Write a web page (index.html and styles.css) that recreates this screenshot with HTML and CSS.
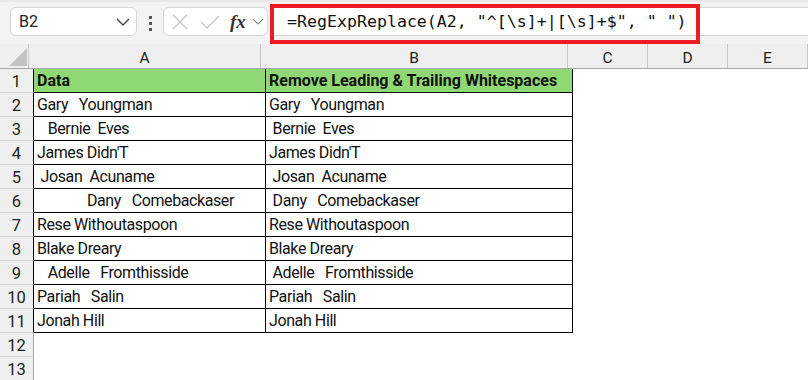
FILE: index.html
```html
<!DOCTYPE html>
<html lang="en">
<head>
    <meta charset="UTF-8">
    <meta name="viewport" content="width=device-width, initial-scale=1.0">
    <title>RegExpReplace - Trim Whitespaces</title>
    <link rel="stylesheet" href="styles.css">
</head>
<body>
    <div class="toolbar">
        <div class="namebox">
            <span>B2</span>
            <svg class="chev" width="14" height="8" viewBox="0 0 14 8"><path d="M1 1l6 6 6-6" fill="none" stroke="#444" stroke-width="1.4"/></svg>
        </div>
        <div class="grip"><i></i><i></i><i></i></div>
        <div class="fxbox">
            <svg width="16" height="16" viewBox="0 0 16 16"><path d="M1 1l14 14M15 1L1 15" fill="none" stroke="#c4c4c4" stroke-width="1.3"/></svg>
            <svg width="20" height="14" viewBox="0 0 20 14"><path d="M1 7l6 6L19 1" fill="none" stroke="#c4c4c4" stroke-width="1.3"/></svg>
            <span class="fx">fx</span>
            <svg width="12" height="7" viewBox="0 0 12 7"><path d="M1 1l5 5 5-5" fill="none" stroke="#888" stroke-width="1.2"/></svg>
        </div>
        <div class="formula"><span>=RegExpReplace(A2, "^[\s]+|[\s]+$", " ")</span></div>
        <div class="highlight"></div>
    </div>

    <div class="sheet">
        <div class="row head">
            <div class="corner"><svg width="18" height="18" viewBox="0 0 18 18"><path d="M18 0V18H0Z" fill="#c3c3c3"/></svg></div>
            <div class="colhead col-a">A</div>
            <div class="colhead col-b">B</div>
            <div class="colhead col-x">C</div>
            <div class="colhead col-x">D</div>
            <div class="colhead col-x">E</div>
        </div>
        <div class="row">
            <div class="rownum in-table">1</div>
            <div class="cell col-a title">Data</div>
            <div class="cell col-b title">Remove Leading &amp; Trailing Whitespaces</div>
            <div class="empty col-x"></div><div class="empty col-x"></div><div class="empty col-x"></div>
        </div>
        <div class="row">
            <div class="rownum in-table">2</div>
            <div class="cell col-a">Gary   Youngman</div>
            <div class="cell col-b">Gary   Youngman</div>
            <div class="empty col-x"></div><div class="empty col-x"></div><div class="empty col-x"></div>
        </div>
        <div class="row">
            <div class="rownum in-table">3</div>
            <div class="cell col-a">   Bernie  Eves</div>
            <div class="cell col-b"> Bernie  Eves</div>
            <div class="empty col-x"></div><div class="empty col-x"></div><div class="empty col-x"></div>
        </div>
        <div class="row">
            <div class="rownum in-table">4</div>
            <div class="cell col-a">James Didn'T</div>
            <div class="cell col-b">James Didn'T</div>
            <div class="empty col-x"></div><div class="empty col-x"></div><div class="empty col-x"></div>
        </div>
        <div class="row">
            <div class="rownum in-table">5</div>
            <div class="cell col-a"> Josan  Acuname</div>
            <div class="cell col-b"> Josan  Acuname</div>
            <div class="empty col-x"></div><div class="empty col-x"></div><div class="empty col-x"></div>
        </div>
        <div class="row">
            <div class="rownum in-table">6</div>
            <div class="cell col-a">              Dany   Comebackaser</div>
            <div class="cell col-b"> Dany   Comebackaser</div>
            <div class="empty col-x"></div><div class="empty col-x"></div><div class="empty col-x"></div>
        </div>
        <div class="row">
            <div class="rownum in-table">7</div>
            <div class="cell col-a">Rese Withoutaspoon</div>
            <div class="cell col-b">Rese Withoutaspoon</div>
            <div class="empty col-x"></div><div class="empty col-x"></div><div class="empty col-x"></div>
        </div>
        <div class="row">
            <div class="rownum in-table">8</div>
            <div class="cell col-a">Blake Dreary</div>
            <div class="cell col-b">Blake Dreary</div>
            <div class="empty col-x"></div><div class="empty col-x"></div><div class="empty col-x"></div>
        </div>
        <div class="row">
            <div class="rownum in-table">9</div>
            <div class="cell col-a">   Adelle   Fromthisside</div>
            <div class="cell col-b"> Adelle   Fromthisside</div>
            <div class="empty col-x"></div><div class="empty col-x"></div><div class="empty col-x"></div>
        </div>
        <div class="row">
            <div class="rownum in-table">10</div>
            <div class="cell col-a">Pariah   Salin</div>
            <div class="cell col-b">Pariah   Salin</div>
            <div class="empty col-x"></div><div class="empty col-x"></div><div class="empty col-x"></div>
        </div>
        <div class="row">
            <div class="rownum in-table">11</div>
            <div class="cell col-a">Jonah Hill</div>
            <div class="cell col-b">Jonah Hill</div>
            <div class="empty col-x"></div><div class="empty col-x"></div><div class="empty col-x"></div>
        </div>
        <div class="row">
            <div class="rownum">12</div>
            <div class="empty col-a"></div><div class="empty col-b"></div>
            <div class="empty col-x"></div><div class="empty col-x"></div><div class="empty col-x"></div>
        </div>
        <div class="row">
            <div class="rownum">13</div>
            <div class="empty col-a"></div><div class="empty col-b"></div>
            <div class="empty col-x"></div><div class="empty col-x"></div><div class="empty col-x"></div>
        </div>
    </div>
</body>
</html>
```

FILE: styles.css
```css
/* Excel-like sheet with a formula bar on top */
* {
    box-sizing: border-box;
}

body {
    margin: 0;
    width: 808px;
    height: 380px;
    overflow: hidden;
    background-color: #fff;
    font-family: Roboto, "Liberation Sans", sans-serif;
    color: #111;
}

/* formula bar */
.toolbar {
    position: relative;
    display: flex;
    align-items: flex-start;
    height: 44px;
    padding-top: 7px;
    background-color: #f3f3f3;
    border-top: 2px solid #e8e8e8;
}

.namebox {
    display: flex;
    align-items: center;
    justify-content: space-between;
    width: 127px;
    height: 29px;
    margin-top: -2px;
    margin-left: 10px;
    padding: 0 6px 0 8px;
    background-color: #fff;
    border: 1px solid #d6d6d6;
    border-radius: 6px;
    font-size: 16px;
    color: #222;
}

.grip {
    display: flex;
    flex-direction: column;
    align-items: center;
    gap: 3px;
    width: 26px;
    padding-top: 7px;
}

.grip i {
    width: 3px;
    height: 3px;
    background-color: #555;
}

.fxbox {
    display: flex;
    align-items: center;
    width: 105px;
    height: 29px;
    margin-top: -2px;
    padding-left: 8px;
    background-color: #fff;
    border: 1px solid #d6d6d6;
    border-radius: 6px;
}

.fxbox svg:nth-child(2) {
    margin-left: 12px;
}

.fx {
    margin-left: 10px;
    margin-right: 6px;
    font-family: "Liberation Serif", serif;
    font-style: italic;
    font-weight: bold;
    font-size: 19px;
    color: #333;
}

.formula {
    flex: 1;
    height: 29px;
    margin-top: -2px;
    margin-left: 4px;
    padding-left: 14px;
    display: flex;
    align-items: center;
    background-color: #fff;
    border: 1px solid #d6d6d6;
    border-right: none;
    font-family: "DejaVu Sans Mono", "Liberation Mono", monospace;
    font-size: 16.6px;
    color: #111;
    white-space: pre;
}

.highlight {
    position: absolute;
    left: 270px;
    top: 2px;
    width: 430px;
    height: 40px;
    border: 4px solid #ec1c24;
}

/* grid */
.row {
    display: flex;
    height: 24px;
}

.row.head {
    height: 25px;
    background-color: #efefef;
    border-bottom: 1px solid #a8a8a8;
}

.corner {
    width: 34px;
    display: flex;
    align-items: flex-end;
    justify-content: flex-end;
    padding: 0 1px 2px 0;
    border-right: 1px solid #c8c8c8;
}

.colhead {
    display: flex;
    align-items: center;
    justify-content: center;
    padding-top: 3px;
    font-size: 15.5px;
    color: #222;
    border-right: 1px solid #c8c8c8;
}

.col-a {
    width: 232px;
    flex-shrink: 0;
}

.col-b {
    width: 307px;
    flex-shrink: 0;
}

.col-x {
    width: 80px;
    flex-shrink: 0;
}

.rownum {
    width: 34px;
    flex-shrink: 0;
    display: flex;
    align-items: center;
    justify-content: center;
    padding-top: 1px;
    background-color: #efefef;
    border-bottom: 1px solid #d4d4d4;
    border-right: 1px solid #a8a8a8;
    font-size: 16.5px;
    color: #222;
}

.rownum.in-table {
    border-right-color: #000;
}

.cell {
    display: flex;
    align-items: flex-end;
    padding: 0 0 2px 3px;
    border-right: 1px solid #000;
    border-bottom: 1px solid #000;
    font-size: 16px;
    letter-spacing: -0.4px;
    white-space: pre;
    overflow: hidden;
}

.cell.title {
    background-color: #8ed973;
    font-weight: bold;
    letter-spacing: 0;
}
```
